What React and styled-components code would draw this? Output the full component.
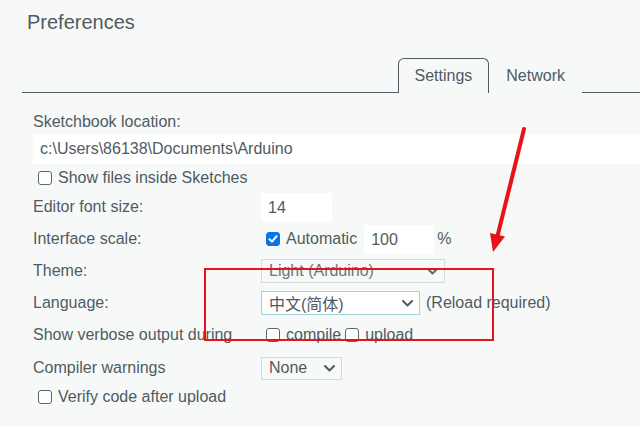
import React from 'react'
import styled, { createGlobalStyle } from 'styled-components'

const GlobalStyle = createGlobalStyle`
body {
    margin: 0;
    background-color: #f7f9f9;
    font-family: "Liberation Sans", Arial, "Noto Sans CJK SC", sans-serif;
    color: #4f5b62;
}
`

const Page = styled.div`
position: relative;
width: 640px;
height: 427px;
overflow: hidden;
`

const Title = styled.h1`
margin: 0;
padding: 12px 0 0 27px;
font-size: 20px;
line-height: 20px;
font-weight: normal;
`

const TabBar = styled.div`
display: flex;
justify-content: flex-end;
margin: 26px 0 0 22px;
padding-right: 58px;
border-bottom: 1px solid #4f5b62;
`

const Tab = styled.div`
height: 33px;
line-height: 34px;
padding: 0 16px;
font-size: 16px;
border: 1px solid ${p => p.$active ? '#4f5b62' : 'transparent'};
border-bottom: none;
border-radius: 6px 6px 0 0;
background-color: #f7f9f9;
margin-bottom: -1px;
padding-bottom: 1px;
`

const Content = styled.div`
display: flex;
flex-direction: column;
padding-left: 33px;
font-size: 16px;
`

const Label = styled.div`
margin-top: 17px;
line-height: 24px;
`

const PathInput = styled.div`
height: 30px;
line-height: 30px;
padding-left: 7px;
background-color: #ffffff;
`

const Row = styled.div`
display: flex;
align-items: center;
height: ${p => p.$h || 32}px;
`

const RowLabel = styled.div`
width: 228px;
flex-shrink: 0;
white-space: nowrap;
`

const Controls = styled.div`
display: flex;
align-items: center;
`

const TextBox = styled.div`
width: ${p => p.$w}px;
height: 29px;
line-height: 29px;
padding-left: 7px;
box-sizing: border-box;
background-color: #ffffff;
`

const Check = styled.span`
display: inline-block;
box-sizing: border-box;
width: 14px;
height: 14px;
margin-left: ${p => p.$ml || 0}px;
margin-right: 6px;
border-radius: 3px;
border: 1px solid ${p => p.$checked ? '#0b74e5' : '#5d676d'};
background-color: ${p => p.$checked ? '#0b74e5' : '#ffffff'};
position: relative;
flex-shrink: 0;

svg {
    position: absolute;
    left: 1px;
    top: 1px;
}
`

const CheckLabel = styled.label`
display: flex;
align-items: center;
margin-right: ${p => p.$mr || 0}px;
`

const Select = styled.div`
display: flex;
align-items: center;
justify-content: space-between;
box-sizing: border-box;
width: ${p => p.$w}px;
height: ${p => p.$h || 24}px;
padding: 0 6px 0 7px;
border: 1px solid ${p => p.$focus ? '#a3d3d7' : '#d4dbdb'};
background-color: ${p => p.$focus ? '#ffffff' : '#f7f9f9'};
color: ${p => p.$disabled ? '#6b767c' : '#4f5b62'};
font-size: 16px;
`

const Hint = styled.span`
margin-left: ${p => p.$ml ?? 6}px;
`

const Annotation = styled.svg`
position: absolute;
left: 0;
top: 0;
pointer-events: none;
`

const Chevron = ({ color = '#4f5b62' }) => (
    <svg width="11" height="7" viewBox="0 0 11 7">
        <polyline points="1,1 5.5,5.5 10,1" fill="none" stroke={color} strokeWidth="2" strokeLinecap="round" strokeLinejoin="round" />
    </svg>
)

const CheckBox = ({ checked, ml }) => (
    <Check $checked={checked} $ml={ml}>
        {checked && (
            <svg width="10" height="10" viewBox="0 0 10 10">
                <polyline points="1.5,5.2 4,7.6 8.6,2.2" fill="none" stroke="#ffffff" strokeWidth="2" strokeLinecap="round" strokeLinejoin="round" />
            </svg>
        )}
    </Check>
)

const App = () => {
    return (
        <Page>
            <GlobalStyle />
            <Title>Preferences</Title>

            <TabBar>
                <Tab $active>Settings</Tab>
                <Tab>Network</Tab>
            </TabBar>

            <Content>
                <Label>Sketchbook location:</Label>
                <PathInput>c:\Users\86138\Documents\Arduino</PathInput>

                <Row $h={27}>
                    <CheckLabel><CheckBox ml={5} />Show files inside Sketches</CheckLabel>
                </Row>

                <Row>
                    <RowLabel>Editor font size:</RowLabel>
                    <TextBox $w={71}>14</TextBox>
                </Row>

                <Row>
                    <RowLabel>Interface scale:</RowLabel>
                    <Controls>
                        <CheckLabel $mr={7}><CheckBox checked ml={5} />Automatic</CheckLabel>
                        <TextBox $w={70}>100</TextBox>
                        <Hint $ml={3}>%</Hint>
                    </Controls>
                </Row>

                <Row>
                    <RowLabel>Theme:</RowLabel>
                    <Select $w={184} $disabled>
                        <span>Light (Arduino)</span>
                        <Chevron color="#5e696f" />
                    </Select>
                </Row>

                <Row>
                    <RowLabel>Language:</RowLabel>
                    <Controls>
                        <Select $w={159} $focus>
                            <span>中文(简体)</span>
                            <Chevron />
                        </Select>
                        <Hint>(Reload required)</Hint>
                    </Controls>
                </Row>

                <Row>
                    <RowLabel>Show verbose output during</RowLabel>
                    <Controls>
                        <CheckLabel $mr={4}><CheckBox ml={5} />compile</CheckLabel>
                        <CheckLabel><CheckBox />upload</CheckLabel>
                    </Controls>
                </Row>

                <Row $h={34}>
                    <RowLabel>Compiler warnings</RowLabel>
                    <Select $w={81} $h={23}>
                        <span>None</span>
                        <Chevron />
                    </Select>
                </Row>

                <Row $h={23}>
                    <CheckLabel><CheckBox ml={5} />Verify code after upload</CheckLabel>
                </Row>
            </Content>

            <Annotation width="640" height="427" viewBox="0 0 640 427">
                <rect x="205" y="269" width="288" height="71" fill="none" stroke="#e8121c" strokeWidth="2" />
                <line x1="524" y1="129" x2="497.5" y2="236" stroke="#e8121c" strokeWidth="4" strokeLinecap="round" />
                <polygon points="493,252 490,233 505,236.5" fill="#e8121c" />
            </Annotation>
        </Page>
    )
}

export default App
